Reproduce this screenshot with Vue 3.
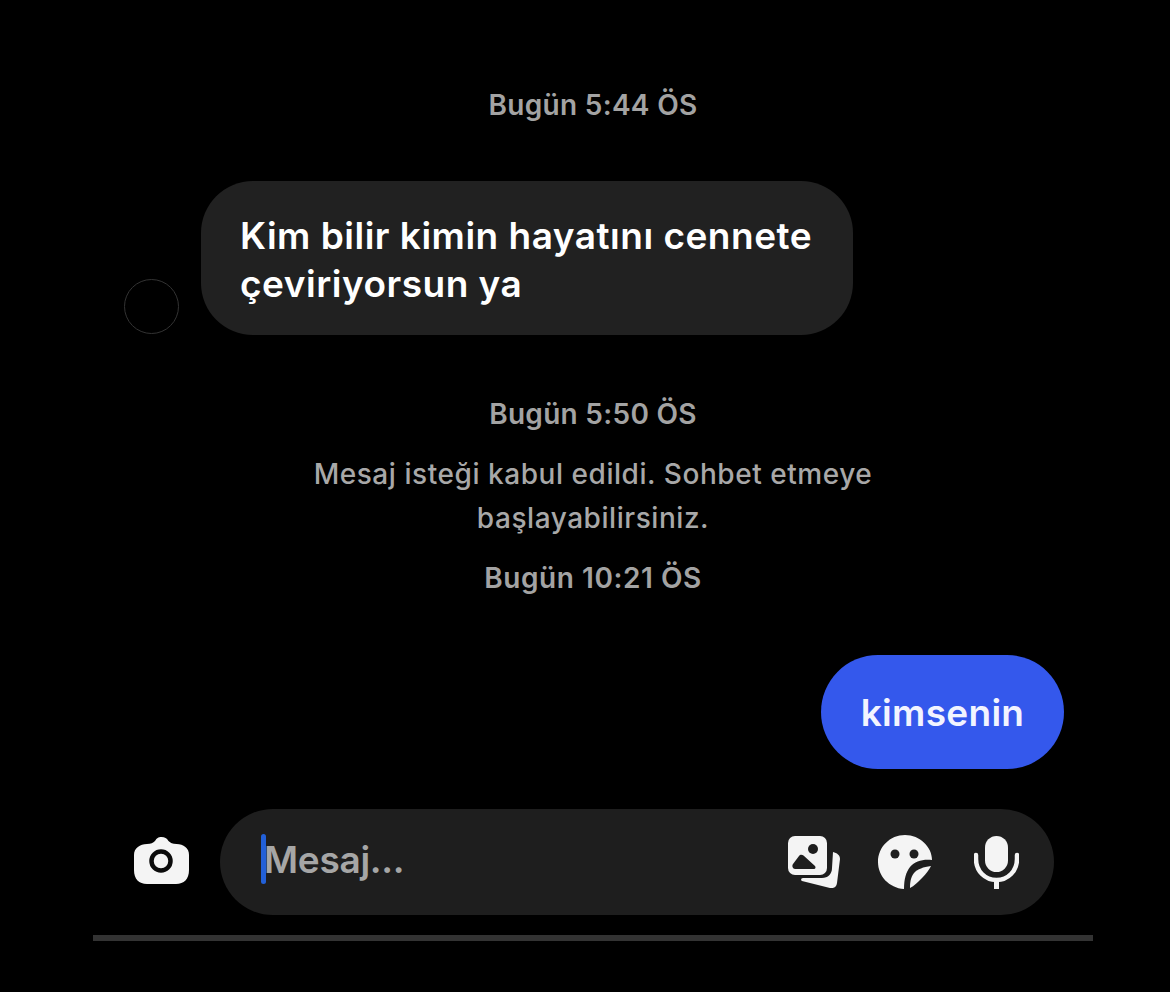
<template>
  <div class="screen">
    <div class="time first">Bugün 5:44 ÖS</div>

    <div class="incoming">
      <div class="avatar"></div>
      <div class="bubble">Kim bilir kimin hayatını cennete<br />çeviriyorsun ya</div>
    </div>

    <div class="time second">Bugün 5:50 ÖS</div>
    <div class="notice">Mesaj isteği kabul edildi. Sohbet etmeye<br />başlayabilirsiniz.</div>
    <div class="time third">Bugün 10:21 ÖS</div>

    <div class="outgoing">
      <div class="bubble-own">kimsenin</div>
    </div>

    <div class="composer">
      <svg class="camera" width="55" height="47" viewBox="0 0 55 47">
        <path
          fill="#f4f4f4"
          d="M13 7c4 0 6-1 8-3 2-3 3-4 6.500-4s5 1 7 4c2 2 4 3 8 3 7 0 12.500 4 12.500 11v15c0 9-5 14-13 14H13C5 47 0 42 0 33V18C0 11 6 7 13 7Z"
        />
        <circle cx="27" cy="24" r="9.500" fill="none" stroke="#0b0b0b" stroke-width="4.500" />
      </svg>

      <div class="input">
        <div class="field">
          <span class="caret"></span>
          <span class="placeholder">Mesaj...</span>
        </div>

        <div class="actions">
          <svg class="gallery" width="52" height="52" viewBox="0 0 52 52">
            <path
              fill="#f4f4f4"
              d="M45 16c4 1 7 3 7 7l-3 24c-.5 4-3 5.500-7 5L14 45c-1.500-.5-1-3 1-3h19c6 0 10-4 10-10Z"
            />
            <rect x="0" y="0" width="39" height="39" rx="7" fill="#f4f4f4" />
            <circle cx="25" cy="13" r="5" fill="#1e1e1e" />
            <path fill="#1e1e1e" d="M5 28l6-8c1-1.500 3-1.500 4.500-.5L27 30c1 1 .5 3-1 3H7c-2 0-3.500-3-2-5Z" />
          </svg>

          <svg class="sticker" width="54" height="54" viewBox="0 0 54 54">
            <path
              fill="#f4f4f4"
              d="M27 0c15 0 27 12 27 25-9-1-17 1-22 7-4 5-6 12-6 22C11 53 0 41 0 27 0 12 12 0 27 0Z"
            />
            <path fill="#f4f4f4" d="M32 53c0-7 1-11 4-15 4-4 9-6 17-7-2 4-5 8-9 12-4 4-8 8-12 10Z" />
            <circle cx="17" cy="19" r="4.500" fill="#1e1e1e" />
            <circle cx="36" cy="19" r="4.500" fill="#1e1e1e" />
          </svg>

          <svg class="mic" width="45" height="53" viewBox="0 0 45 53">
            <rect x="11" y="0" width="23" height="36" rx="11.500" fill="#f4f4f4" />
            <path d="M2 19v4c0 12 9 21 20.500 21S43 35 43 23v-4" fill="none" stroke="#f4f4f4" stroke-width="4.500" stroke-linecap="round" />
            <path d="M22.500 44v9" fill="none" stroke="#f4f4f4" stroke-width="5" />
          </svg>
        </div>
      </div>
    </div>

    <div class="home-bar"></div>
  </div>
</template>

<script setup>
</script>

<style>
html,
body {
  background: #000;
}
</style>

<style scoped>
.screen {
  width: 1000px;
  height: 992px;
  padding: 0 77px 0 93px;
  background: #000;
  display: flex;
  flex-direction: column;
  font-family: Inter, "Liberation Sans", sans-serif;
  overflow: hidden;
}

.time {
  height: 32px;
  line-height: 32px;
  text-align: center;
  font-size: 28px;
  font-weight: 600;
  letter-spacing: 0.3px;
  color: #a3a3a3;
}

.first {
  margin-top: 89px;
}

.second {
  margin-top: 63px;
}

.third {
  margin-top: 22px;
  letter-spacing: 0.55px;
}

.incoming {
  display: flex;
  align-items: flex-end;
  margin-top: 60px;
  margin-left: 31px;
  gap: 22px;
}

.avatar {
  width: 53px;
  height: 53px;
  margin-bottom: 1px;
  border: 1px solid #333;
  border-radius: 50%;
}

.bubble {
  box-sizing: border-box;
  width: 652px;
  height: 154px;
  padding: 31px 39px 0;
  border-radius: 52px;
  background: #212121;
  color: #fff;
  font-size: 37px;
  font-weight: 600;
  letter-spacing: 0.5px;
  line-height: 48px;
  white-space: nowrap;
}

.notice {
  margin-top: 22px;
  text-align: center;
  font-size: 28px;
  font-weight: 500;
  letter-spacing: 0.55px;
  line-height: 44px;
  color: #a8a8a8;
}

.outgoing {
  display: flex;
  justify-content: flex-end;
  margin-top: 61px;
  padding-right: 29px;
}

.bubble-own {
  width: 243px;
  height: 114px;
  line-height: 116px;
  text-align: center;
  border-radius: 57px;
  background: #3458ec;
  color: #f2f4ff;
  font-size: 37px;
  font-weight: 600;
  letter-spacing: 0.3px;
}

.composer {
  display: flex;
  align-items: center;
  margin-top: 40px;
  padding-left: 41px;
  padding-right: 39px;
}

.camera {
  flex: none;
  margin-right: 31px;
  margin-bottom: 3px;
}

.input {
  flex: 1;
  height: 106px;
  padding: 0 35px 0 41px;
  display: flex;
  align-items: center;
  justify-content: space-between;
  border-radius: 53px;
  background: #1e1e1e;
}

.field {
  display: flex;
  align-items: center;
  margin-bottom: 6px;
}

.caret {
  width: 5px;
  height: 50px;
  border-radius: 3px;
  background: #2260d8;
}

.placeholder {
  margin-left: -2px;
  font-size: 37px;
  font-weight: 600;
  letter-spacing: -0.3px;
  color: #a6a6a6;
}

.actions {
  display: flex;
  align-items: center;
  gap: 38px;
}

.mic {
  margin-left: 4px;
}

.home-bar {
  height: 6px;
  margin-top: 20px;
  background: #333;
}
</style>
